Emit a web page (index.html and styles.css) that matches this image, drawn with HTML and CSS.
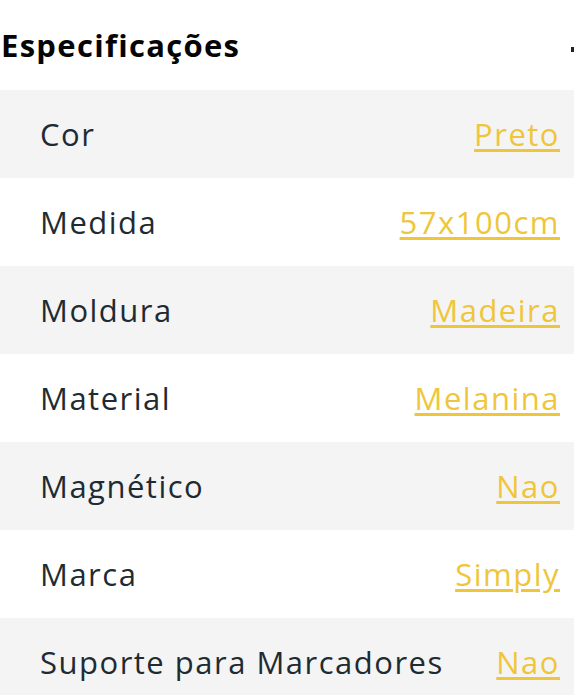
FILE: index.html
```html
<!DOCTYPE html>
<html lang="pt">
<head>
<meta charset="utf-8">
<link rel="stylesheet" href="styles.css">
</head>
<body>
<section class="specs">
  <header class="specs-head">
    <h2 class="specs-title">Especificações</h2>
    <span class="specs-toggle"></span>
  </header>
  <ul class="specs-list">
    <li class="spec-row"><span class="spec-label">Cor</span><a class="spec-value" href="#">Preto</a></li>
    <li class="spec-row"><span class="spec-label">Medida</span><a class="spec-value" href="#">57x100cm</a></li>
    <li class="spec-row"><span class="spec-label">Moldura</span><a class="spec-value" href="#">Madeira</a></li>
    <li class="spec-row"><span class="spec-label">Material</span><a class="spec-value" href="#">Melanina</a></li>
    <li class="spec-row"><span class="spec-label">Magnético</span><a class="spec-value" href="#">Nao</a></li>
    <li class="spec-row"><span class="spec-label">Marca</span><a class="spec-value" href="#">Simply</a></li>
    <li class="spec-row"><span class="spec-label">Suporte para Marcadores</span><a class="spec-value" href="#">Nao</a></li>
  </ul>
</section>
</body>
</html>
```
FILE: styles.css
```css
html, body {
  margin: 0;
  padding: 0;
  background: #ffffff;
}
body {
  font-family: "Open Sans", "DejaVu Sans", sans-serif;
  color: #1f2b33;
  overflow: hidden;
}
.specs {
  width: 574px;
}
.specs-head {
  height: 90px;
  display: flex;
  align-items: center;
  justify-content: space-between;
  padding-left: 1px;
}
.specs-title {
  margin: 0;
  font-size: 31px;
  font-weight: 700;
  letter-spacing: 1.3px;
  color: #050505;
  line-height: 1;
}
.specs-toggle {
  width: 3px;
  height: 5px;
  background: #222;
  margin-top: 8px;
}
.specs-list {
  list-style: none;
  margin: 0;
  padding: 0;
}
.spec-row {
  height: 88px;
  display: flex;
  align-items: center;
  justify-content: space-between;
  padding: 0 14px 0 40px;
  font-size: 31px;
  letter-spacing: 1.5px;
}
.spec-row:nth-child(odd) {
  background: #f4f4f4;
}
.spec-label {
  color: #1f2b33;
}
.spec-value {
  color: #efc63a;
  text-decoration: underline;
  text-decoration-thickness: 3px;
  text-underline-offset: 3px;
}
```
